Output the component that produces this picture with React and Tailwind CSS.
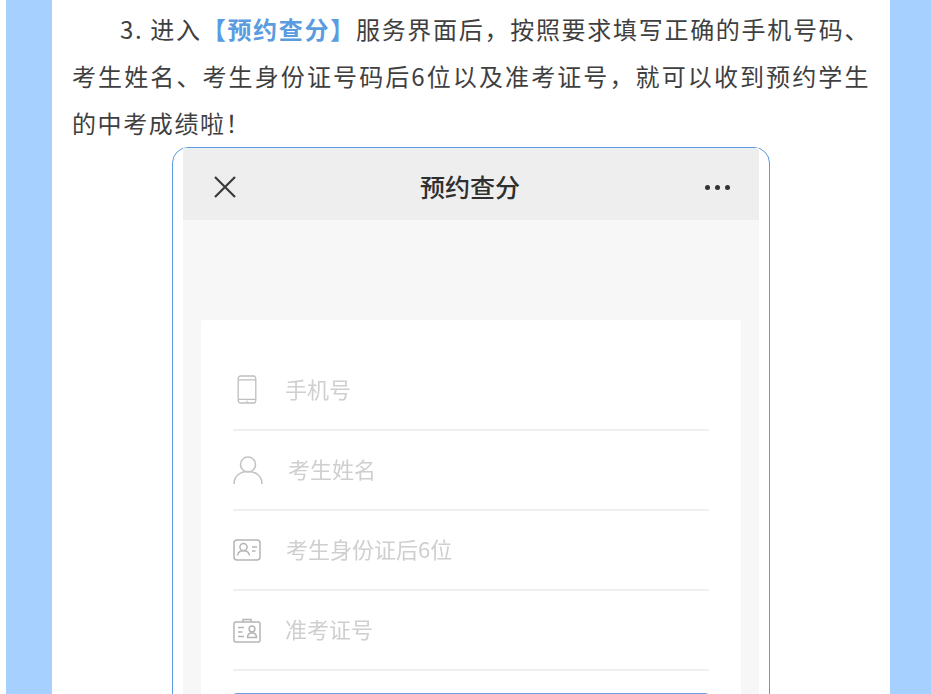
const CJK = { fontFamily: '"Noto Sans CJK SC", "Noto Sans", sans-serif' };

function PhoneIcon() {
  return (
    <svg width="20" height="29" viewBox="0 0 20 29" fill="none" stroke="#bfbfbf" strokeWidth="1.3">
      <rect x="1.2" y="1" width="17.6" height="27" rx="2.5" />
      <path d="M1.2 4.800h17.600M1.200 24.300h17.600" />
      <circle cx="10" cy="26.200" r="0.8" fill="#bfbfbf" stroke="none" />
    </svg>
  );
}
function UserIcon() {
  return (
    <svg width="30" height="30" viewBox="0 0 30 30" fill="none" stroke="#c4c4c4" strokeWidth="1.6">
      <circle cx="15" cy="9.500" r="7.500" />
      <path d="M1 29c0-8 6-12.500 14-12.500S29 21 29 29" />
    </svg>
  );
}
function IdIcon() {
  return (
    <svg width="28" height="22" viewBox="0 0 28 22" fill="none" stroke="#b5b5b5" strokeWidth="1.5">
      <rect x="1" y="1" width="26" height="20" rx="3" />
      <circle cx="10.500" cy="8" r="3.600" />
      <path d="M4.500 16.500c.5-3.200 3-4.800 6-4.800s5.500 1.600 6 4.800M19 8h5M19 12h3.500" />
    </svg>
  );
}
function BadgeIcon() {
  return (
    <svg width="28" height="25" viewBox="0 0 28 25" fill="none" stroke="#b5b5b5" strokeWidth="1.5">
      <rect x="1" y="4" width="26" height="20" rx="1.500" />
      <path d="M10 4V1.500h8V4M5 9.500h6M5 14h4.500M5 18.500h6" />
      <circle cx="19" cy="11" r="2.900" />
      <path d="M14.500 19.500c0-3 2-4.500 4.500-4.500s4.500 1.500 4.500 4.500z" />
    </svg>
  );
}

function Row({ icon, label, iconBox, gap }) {
  return (
    <div className="h-[80px] flex items-center border-b-2 border-[#efefef]">
      <div className={`flex items-center justify-center ${iconBox}`}>{icon}</div>
      <span className={`text-[22px] text-[#cfcfcf] blur-[0.4px] pb-[4px] ${gap}`} style={CJK}>{label}</span>
    </div>
  );
}

export default function App() {
  return (
    <div className="h-[694px] w-[931px] overflow-hidden bg-white flex" style={CJK}>
      <div className="w-[6px] shrink-0" />
      <div className="w-[46px] shrink-0 bg-[#a6d0ff]" />
      <div className="w-[838px] shrink-0 bg-white px-[20px] pt-[5px]">
        <p className="text-[24px] leading-[47px] text-[#3f3f3f] tracking-[1.6px] indent-[48px] text-justify">
          3. 进入<strong className="text-[#5b9be0] font-bold">【预约查分】</strong>服务界面后，按照要求填写正确的手机号码、考生姓名、考生身份证号码后6位以及准考证号，就可以收到预约学生的中考成绩啦！
        </p>
        <div className="mx-auto mt-[1px] w-[598px] h-[560px] border border-[#5a9be2] rounded-t-[16px] px-[10px] bg-white">
          <div className="h-full bg-[#f7f7f7]">
            <div className="h-[72px] bg-[#eeeeee] flex items-center justify-between pl-[30px] pr-[29px] pt-[6px]">
              <svg width="24" height="24" viewBox="0 0 24 24" fill="none" stroke="#3a3a3a" strokeWidth="2.200">
                <path d="M2 2l20 20M22 2L2 22" />
              </svg>
              <span className="text-[25px] font-medium text-[#2f2f2f] mr-[2px]">预约查分</span>
              <div className="flex gap-[5px]">
                <span className="w-[5px] h-[5px] rounded-full bg-[#333333]" />
                <span className="w-[5px] h-[5px] rounded-full bg-[#333333]" />
                <span className="w-[5px] h-[5px] rounded-full bg-[#333333]" />
              </div>
            </div>
            <div className="px-[18px] pt-[100px]">
              <div className="h-[400px] bg-white rounded-[3px] px-[32px] pt-[31px]">
                <Row icon={<PhoneIcon />} label="手机号" iconBox="w-[28px] -mt-[1px]" gap="ml-[24px]" />
                <Row icon={<UserIcon />} label="考生姓名" iconBox="w-[30px]" gap="ml-[25px]" />
                <Row icon={<IdIcon />} label="考生身份证后6位" iconBox="w-[28px]" gap="ml-[25px]" />
                <Row icon={<BadgeIcon />} label="准考证号" iconBox="w-[28px]" gap="ml-[24px]" />
                <div className="mt-[22px] h-[10px] bg-[#6b9fe3] rounded-t-[4px]" />
              </div>
            </div>
          </div>
        </div>
      </div>
      <div className="flex-1 bg-[#a6d0ff]" />
    </div>
  );
}
